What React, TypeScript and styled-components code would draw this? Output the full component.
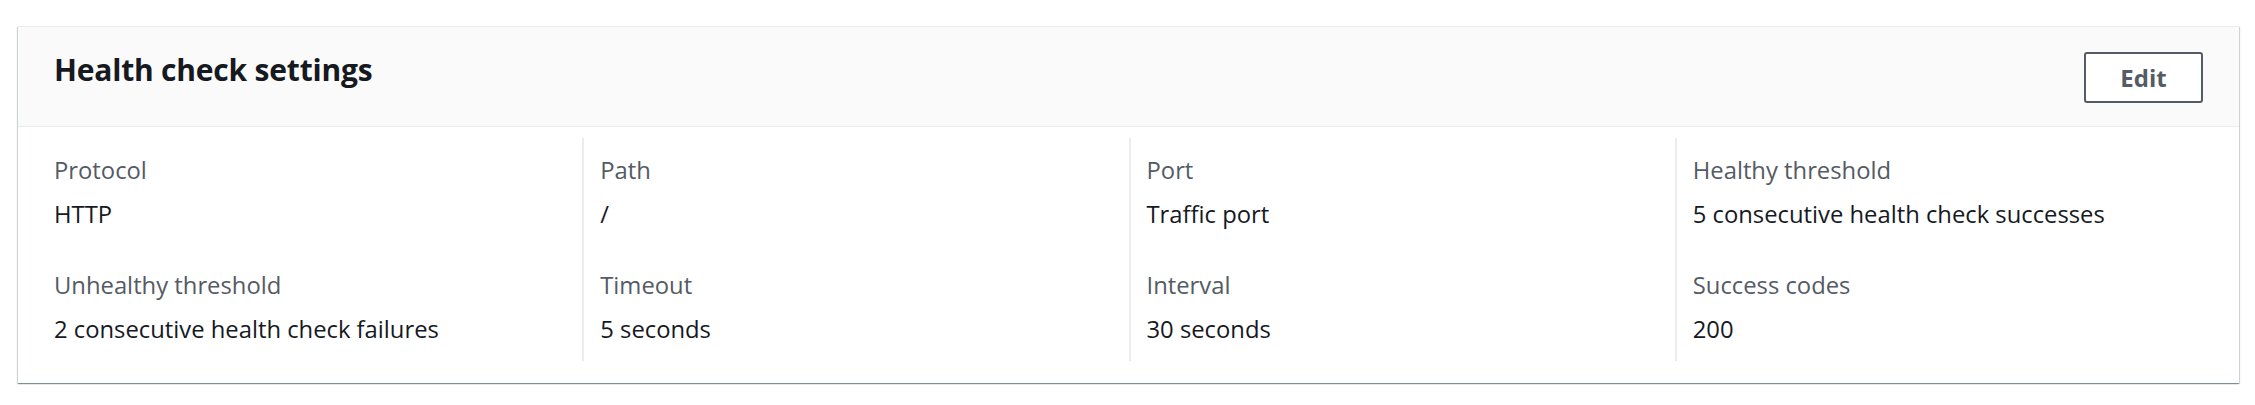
import React from "react";
import styled, { createGlobalStyle } from "styled-components";

const Global = createGlobalStyle`
  html, body { margin: 0; padding: 0; background: #ffffff; }
  body { font-family: "Open Sans", "Noto Sans", Arial, sans-serif; }
`;

const Page = styled.div`
  padding: 26px 16px 20px 18px;
`;

const Container = styled.section`
  background: #ffffff;
  border-top: 1px solid #eaeded;
  box-shadow: 0 1px 1px 0 rgba(0, 28, 36, 0.3), 1px 1px 1px 0 rgba(0, 28, 36, 0.15),
    -1px 1px 1px 0 rgba(0, 28, 36, 0.15);
  width: 2221px;
`;

const Header = styled.header`
  display: flex;
  align-items: center;
  justify-content: space-between;
  height: 100px;
  box-sizing: border-box;
  padding: 0 36px 0 36px;
  background: #fafafa;
  border-bottom: 1px solid #eaeded;
`;

const Title = styled.h2`
  margin: 0;
  margin-top: -14px;
  font-size: 30px;
  font-weight: 700;
  color: #16191f;
  letter-spacing: -0.2px;
`;

const Button = styled.button`
  font-family: inherit;
  width: 119px;
  height: 51px;
  border: 2px solid #545b64;
  border-radius: 3px;
  background: #ffffff;
  color: #545b64;
  font-size: 24px;
  font-weight: 700;
  cursor: pointer;
  margin-top: 2px;
`;

const Body = styled.div`
  display: grid;
  grid-template-columns: repeat(4, 1fr);
  padding: 11px 18px 22px 18px;
`;

const Column = styled.div<{ $first?: boolean }>`
  display: flex;
  flex-direction: column;
  gap: 37px;
  padding: 15px 18px 15px ${(p) => (p.$first ? "18px" : "16px")};
  border-left: ${(p) => (p.$first ? "none" : "2px solid #eaeded")};
`;

const Pair = styled.div`
  display: flex;
  flex-direction: column;
  gap: 10px;
`;

const Label = styled.div`
  font-size: 23.8px;
  line-height: 34px;
  color: #545b64;
`;

const Value = styled.div`
  font-size: 23.8px;
  line-height: 34px;
  color: #16191f;
`;

const columns: [string, string][][] = [
  [
    ["Protocol", "HTTP"],
    ["Unhealthy threshold", "2 consecutive health check failures"],
  ],
  [
    ["Path", "/"],
    ["Timeout", "5 seconds"],
  ],
  [
    ["Port", "Traffic port"],
    ["Interval", "30 seconds"],
  ],
  [
    ["Healthy threshold", "5 consecutive health check successes"],
    ["Success codes", "200"],
  ],
];

export default function App() {
  return (
    <>
      <Global />
      <Page>
        <Container>
          <Header>
            <Title>Health check settings</Title>
            <Button>Edit</Button>
          </Header>
          <Body>
            {columns.map((col, i) => (
              <Column key={i} $first={i === 0}>
                {col.map(([k, v]) => (
                  <Pair key={k}>
                    <Label>{k}</Label>
                    <Value>{v}</Value>
                  </Pair>
                ))}
              </Column>
            ))}
          </Body>
        </Container>
      </Page>
    </>
  );
}
